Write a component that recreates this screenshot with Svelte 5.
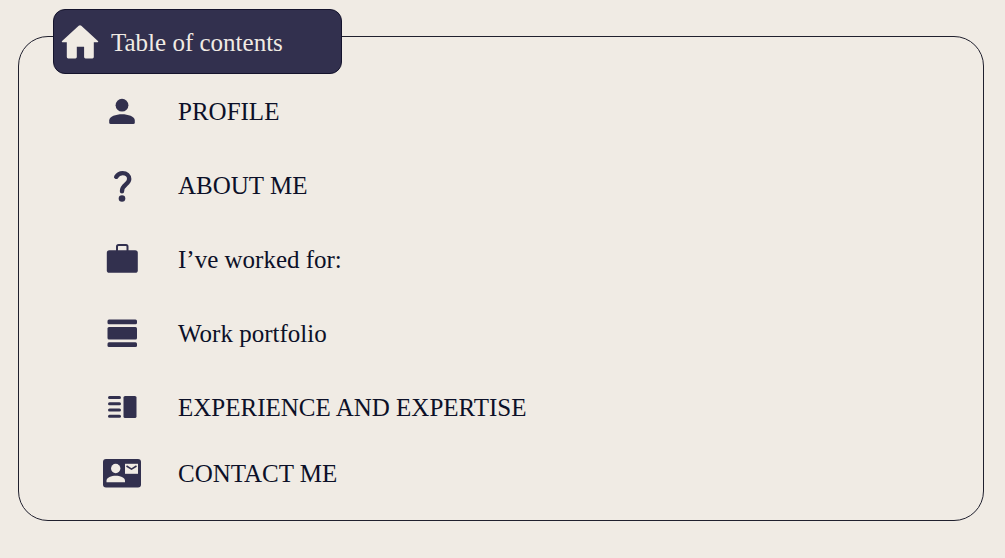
<script lang="ts">
  interface Entry {
    id: string;
    label: string;
  }

  const entries: Entry[] = [
    { id: "profile", label: "PROFILE" },
    { id: "about", label: "ABOUT ME" },
    { id: "clients", label: "I’ve worked for:" },
    { id: "portfolio", label: "Work portfolio" },
    { id: "experience", label: "EXPERIENCE AND EXPERTISE" },
    { id: "contact", label: "CONTACT ME" },
  ];
</script>

<nav class="toc" aria-labelledby="toc-title">
  <header class="toc-tab">
    <svg class="toc-icon" viewBox="0 0 38 38" aria-hidden="true">
      <path d="M17.7 2.7q1.3-1.1 2.6 0L36.9 17.9q1.1 1.2-.5 1.4H32.8V34.1q0 1.4-1.4 1.4H24.5q-1.4 0-1.4-1.4V23.7H15.8V34.1q0 1.4-1.4 1.4H7.2q-1.4 0-1.4-1.4V19.3H1.6q-1.6-.2-.5-1.4Z" />
    </svg>
    <h1 class="toc-title" id="toc-title">Table of contents</h1>
  </header>

  <ul class="toc-list">
    {#each entries as entry (entry.id)}
      <li>
        <a class="toc-link" href={`#${entry.id}`}>
          <svg class="toc-icon" viewBox="0 0 38 38" aria-hidden="true">
            {#if entry.id === "profile"}
              <circle cx="19" cy="13.2" r="6.4" />
              <path d="M6.2 28.5C6.2 24.5 13 22.3 19 22.3s12.8 2.2 12.8 6.2V30.5Q31.8 32 30.3 32H7.7Q6.2 32 6.2 30.5Z" />
            {:else if entry.id === "about"}
              <path class="hook" d="M13.2 10.8C15 7.8 17.2 7.1 19.6 7.1C23.6 7.1 26.2 9.7 26.2 13C26.2 18.5 19 18.5 19 25.2" />
              <circle cx="19" cy="32.5" r="3.3" />
            {:else if entry.id === "clients"}
              <rect x="3.8" y="10.2" width="31" height="22.6" rx="2.6" />
              <rect class="handle" x="14" y="5" width="10.5" height="8" rx="1.5" />
            {:else if entry.id === "portfolio"}
              <rect x="4.5" y="5.5" width="29.5" height="4.7" rx="1.5" />
              <rect x="4.5" y="13" width="29.5" height="12.5" rx="1.5" />
              <rect x="4.5" y="28.3" width="29.5" height="4.7" rx="1.5" />
            {:else if entry.id === "experience"}
              <rect x="5" y="8" width="13" height="3" rx="1.5" />
              <rect x="5" y="14.2" width="13" height="3" rx="1.5" />
              <rect x="5" y="20.4" width="13" height="3" rx="1.5" />
              <rect x="5" y="26.8" width="13" height="3" rx="1.5" />
              <rect x="20.5" y="8" width="13" height="22" rx="1.6" />
            {:else}
              <rect x="0" y="5" width="38" height="28.6" rx="3" />
              <g class="cutout">
                <circle cx="12.7" cy="14.5" r="4.7" />
                <path d="M3.5 28.3V26.8C3.5 23.5 8.5 21.8 12.7 21.8S22 23.5 22 26.8V28.3Z" />
                <rect x="22" y="9.8" width="13" height="10" />
              </g>
              <path class="flap" d="M23.5 12L28.5 15.2L33.5 12" />
            {/if}
          </svg>
          <span class="toc-label">{entry.label}</span>
        </a>
      </li>
    {/each}
  </ul>
</nav>

<style>
  :global(body) { background: #f0ebe4; }
  .toc { box-sizing: border-box; display: flow-root; margin: 36px 21px 36px 18px; padding: 0 34px 18px; border: 1px solid #20202e; border-radius: 30px; color: #0c1028; font-family: "Liberation Serif", "Times New Roman", serif; font-size: 25px; line-height: 28px; }
  .toc-tab { box-sizing: border-box; display: flex; align-items: center; gap: 12px; width: 289px; max-width: 100%; height: 65px; margin-top: -28px; padding: 0 7px; border: 1px solid #14132c; border-radius: 12px; background: #32304e; color: #f0ebe4; }
  .toc-title { margin: 0; padding-top: 2px; font-size: 25px; font-weight: 400; line-height: 28px; }
  .toc-icon { flex: none; width: 38px; height: 38px; fill: #32304e; }
  .toc-tab .toc-icon { fill: #f0ebe4; }
  .toc-list { margin: 0; padding: 0 0 0 50px; list-style: none; }
  .toc-link { display: flex; align-items: center; gap: 37px; height: 74px; color: inherit; text-decoration: none; }
  .toc-link:hover { text-decoration: underline; }
  .toc-label { padding-top: 2px; }
  li:last-child .toc-link { height: 58px; }
  .hook { fill: none; stroke: #32304e; stroke-width: 4.4; stroke-linecap: round; }
  .handle { fill: none; stroke: #32304e; stroke-width: 2; }
  .cutout { fill: #f0ebe4; }
  .flap { fill: none; stroke: #32304e; stroke-width: 1.5; }
</style>
